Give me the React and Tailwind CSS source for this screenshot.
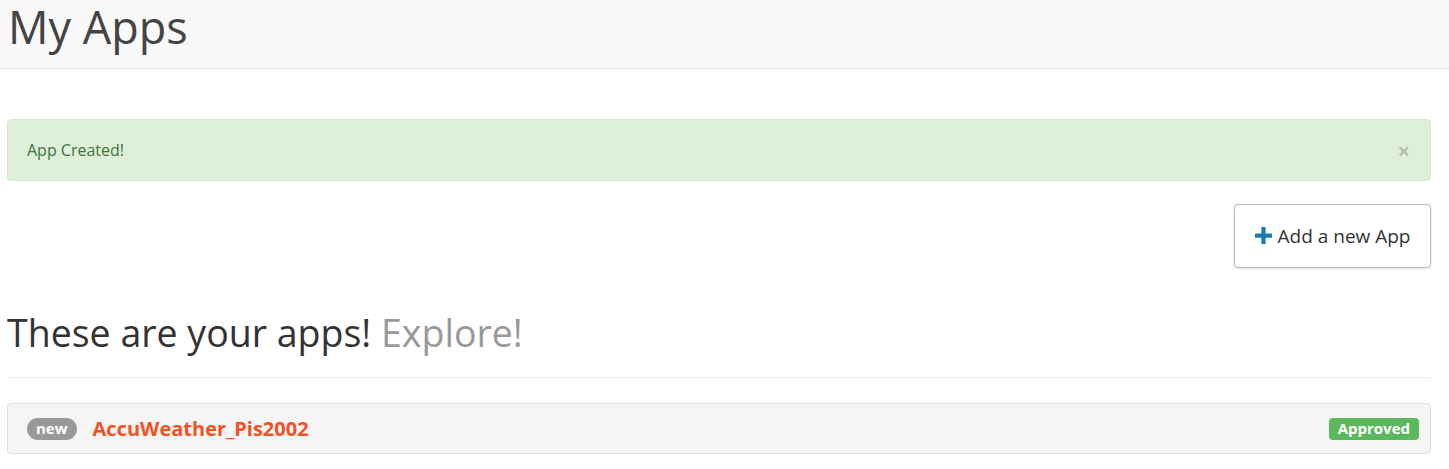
import React from 'react';

const apps = [{ id: 1, name: 'AccuWeather_Pis2002', isNew: true, status: 'Approved' }];

const App = () => {
  return (
    <div className="min-h-screen bg-white text-[#333] font-['Open_Sans',sans-serif]">
      {/* Page header */}
      <div className="h-[69px] bg-[#f9f9f9] border-b border-[#e5e5e5] pl-[8px]">
        <h1 className="text-[45px] leading-[52px] font-normal text-[#444] pt-[1px]">My Apps</h1>
      </div>

      <div className="pl-[7px] pr-[18px]">
        {/* Alert */}
        <div className="mt-[50px] h-[62px] flex items-center justify-between bg-[#dff0d8] border border-[#d6e9c6] rounded-[4px] pl-[19px] pr-[20px]">
          <span className="text-[16px] text-[#3c763d]">App Created!</span>
          <button className="text-[22px] leading-none font-bold text-[#000] opacity-20">×</button>
        </div>

        {/* Add button */}
        <div className="flex justify-end mt-[23px]">
          <button className="h-[64px] w-[197px] flex items-center justify-center gap-[6px] bg-white border border-[#bbb] rounded-[4px] shadow-[0_1px_3px_rgba(0,0,0,0.12)] text-[19px] text-[#333]">
            <svg width="17" height="17" viewBox="0 0 16 16" className="mt-[-1px]">
              <path d="M6 0h4v6h6v4h-6v6h-4v-6h-6v-4h6z" fill="#1c7aae" />
            </svg>
            Add a new App
          </button>
        </div>

        {/* Section title */}
        <h2 className="mt-[43px] text-[37.5px] leading-[44px] font-normal text-[#333]">
          These are your apps! <span className="text-[#999]">Explore!</span>
        </h2>
        <hr className="mt-[22px] border-0 border-t border-[#eee]" />

        {/* App list */}
        <div className="mt-[25px] space-y-2">
          {apps.map(app => (
            <div
              key={app.id}
              className="h-[51px] flex items-center justify-between bg-[#f5f5f5] border border-[#ddd] rounded-[4px] pl-[19px] pr-[11px]"
            >
              <div className="flex items-center gap-[16px]">
                {app.isNew && (
                  <span className="h-[22px] px-[9px] flex items-center rounded-full bg-[#999] text-white text-[15px] font-bold">
                    new
                  </span>
                )}
                <span className="text-[20px] font-bold text-[#f4511e]">{app.name}</span>
              </div>
              <span className="h-[22px] px-[9px] flex items-center rounded-[4px] bg-[#5cb85c] text-white text-[15px] font-bold">
                {app.status}
              </span>
            </div>
          ))}
        </div>
      </div>
    </div>
  );
};

export default App;
